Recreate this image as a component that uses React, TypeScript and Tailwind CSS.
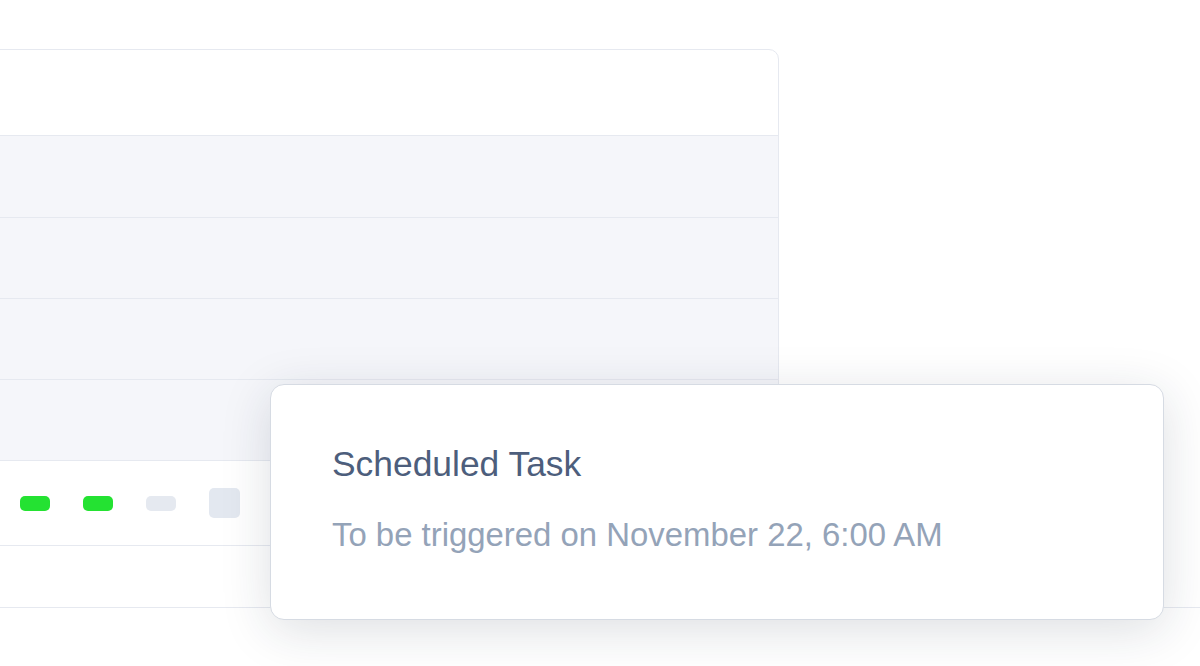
export default function App() {
  const rows = [82, 81, 81, 81];

  return (
    <div className="relative h-[666px] w-[1200px] overflow-hidden bg-white font-['Liberation_Sans',Arial,sans-serif]">
      <div className="pt-[49px]">
        {/* Table card */}
        <div className="-ml-5 w-[799px] rounded-t-[10px] border border-[#e6e9f0] bg-white">
          <div className="h-[86px] border-b border-[#e6e9f0]" />
          {rows.map((h, i) => (
            <div
              key={i}
              className={`${h === 82 ? 'h-[82px]' : 'h-[81px]'} border-b border-[#e6e9f0] bg-[#f5f6fa]`}
            />
          ))}
          <div className="flex h-[84px] items-center gap-[33px] pl-[39px]">
            <span className="h-[15px] w-[30px] rounded-[5px] bg-[#24e232]" />
            <span className="h-[15px] w-[30px] rounded-[5px] bg-[#24e232]" />
            <span className="h-[15px] w-[30px] rounded-[5px] bg-[#e5e9f0]" />
            <span className="h-[30px] w-[31px] rounded-[5px] bg-[#e3e8f0]" />
          </div>
        </div>
        <div className="h-[62px] border-b border-[#e6e9f0]" />
      </div>

      {/* Popover */}
      <div className="absolute left-[270px] top-[384px] h-[236px] w-[894px] rounded-[14px] border border-[#d6dbe3] bg-white pl-[61px] pt-[61px] shadow-[0_10px_50px_rgba(30,41,59,0.15)]">
        <div className="text-[35.4px] leading-[36px] text-[#4d5e7c]">Scheduled Task</div>
        <div className="mt-[36px] text-[32.9px] leading-[33px] text-[#94a3b8]">
          To be triggered on November 22, 6:00 AM
        </div>
      </div>
    </div>
  );
}
